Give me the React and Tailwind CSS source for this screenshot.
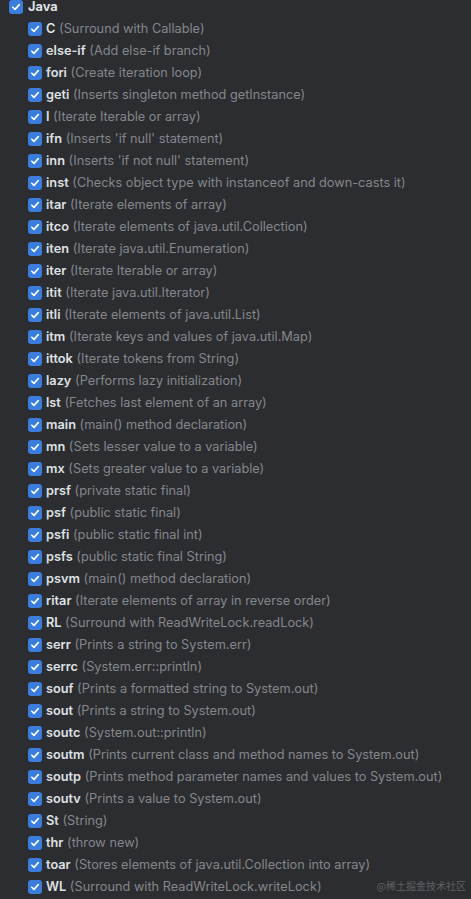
const items = [
  ["C", "Surround with Callable"],
  ["else-if", "Add else-if branch"],
  ["fori", "Create iteration loop"],
  ["geti", "Inserts singleton method getInstance"],
  ["I", "Iterate Iterable or array"],
  ["ifn", "Inserts 'if null' statement"],
  ["inn", "Inserts 'if not null' statement"],
  ["inst", "Checks object type with instanceof and down-casts it"],
  ["itar", "Iterate elements of array"],
  ["itco", "Iterate elements of java.util.Collection"],
  ["iten", "Iterate java.util.Enumeration"],
  ["iter", "Iterate Iterable or array"],
  ["itit", "Iterate java.util.Iterator"],
  ["itli", "Iterate elements of java.util.List"],
  ["itm", "Iterate keys and values of java.util.Map"],
  ["ittok", "Iterate tokens from String"],
  ["lazy", "Performs lazy initialization"],
  ["lst", "Fetches last element of an array"],
  ["main", "main() method declaration"],
  ["mn", "Sets lesser value to a variable"],
  ["mx", "Sets greater value to a variable"],
  ["prsf", "private static final"],
  ["psf", "public static final"],
  ["psfi", "public static final int"],
  ["psfs", "public static final String"],
  ["psvm", "main() method declaration"],
  ["ritar", "Iterate elements of array in reverse order"],
  ["RL", "Surround with ReadWriteLock.readLock"],
  ["serr", "Prints a string to System.err"],
  ["serrc", "System.err::println"],
  ["souf", "Prints a formatted string to System.out"],
  ["sout", "Prints a string to System.out"],
  ["soutc", "System.out::println"],
  ["soutm", "Prints current class and method names to System.out"],
  ["soutp", "Prints method parameter names and values to System.out"],
  ["soutv", "Prints a value to System.out"],
  ["St", "String"],
  ["thr", "throw new"],
  ["toar", "Stores elements of java.util.Collection into array"],
  ["WL", "Surround with ReadWriteLock.writeLock"],
];

function Check() {
  return (
    <span className="flex h-[14px] w-[14px] shrink-0 items-center justify-center rounded-[3px] bg-[#3b7ddd]">
      <svg width="10" height="10" viewBox="0 0 10 10" fill="none">
        <path d="M1.8 5.2 L4 7.4 L8.3 2.6" stroke="white" strokeWidth="1.6" strokeLinecap="round" strokeLinejoin="round" />
      </svg>
    </span>
  );
}

export default function App() {
  return (
    <div
      className="relative h-[899px] w-[471px] overflow-hidden bg-[#2b2d30] text-[12.75px]"
      style={{ fontFamily: "Inter, 'Liberation Sans', sans-serif" }}
    >
      <div className="-mt-[4px] flex flex-col">
        <div className="flex h-[22px] items-center gap-[5px] pl-[9px]">
          <Check />
          <span className="font-bold text-[#dfe1e5]">Java</span>
        </div>
        {items.map(([abbr, desc]) => (
          <div key={abbr} className="flex h-[22px] items-center gap-[4px] pl-[28px] whitespace-nowrap">
            <Check />
            <span>
              <span className="font-semibold text-[#dfe1e5]">{abbr}</span>
              <span className="text-[#85878c]"> ({desc})</span>
            </span>
          </div>
        ))}
      </div>
      <div
        className="absolute right-[5px] bottom-[6px] text-[10px] text-[#5f6164]"
        style={{ fontFamily: "'Noto Sans CJK SC', sans-serif" }}
      >
        @稀土掘金技术社区
      </div>
    </div>
  );
}
